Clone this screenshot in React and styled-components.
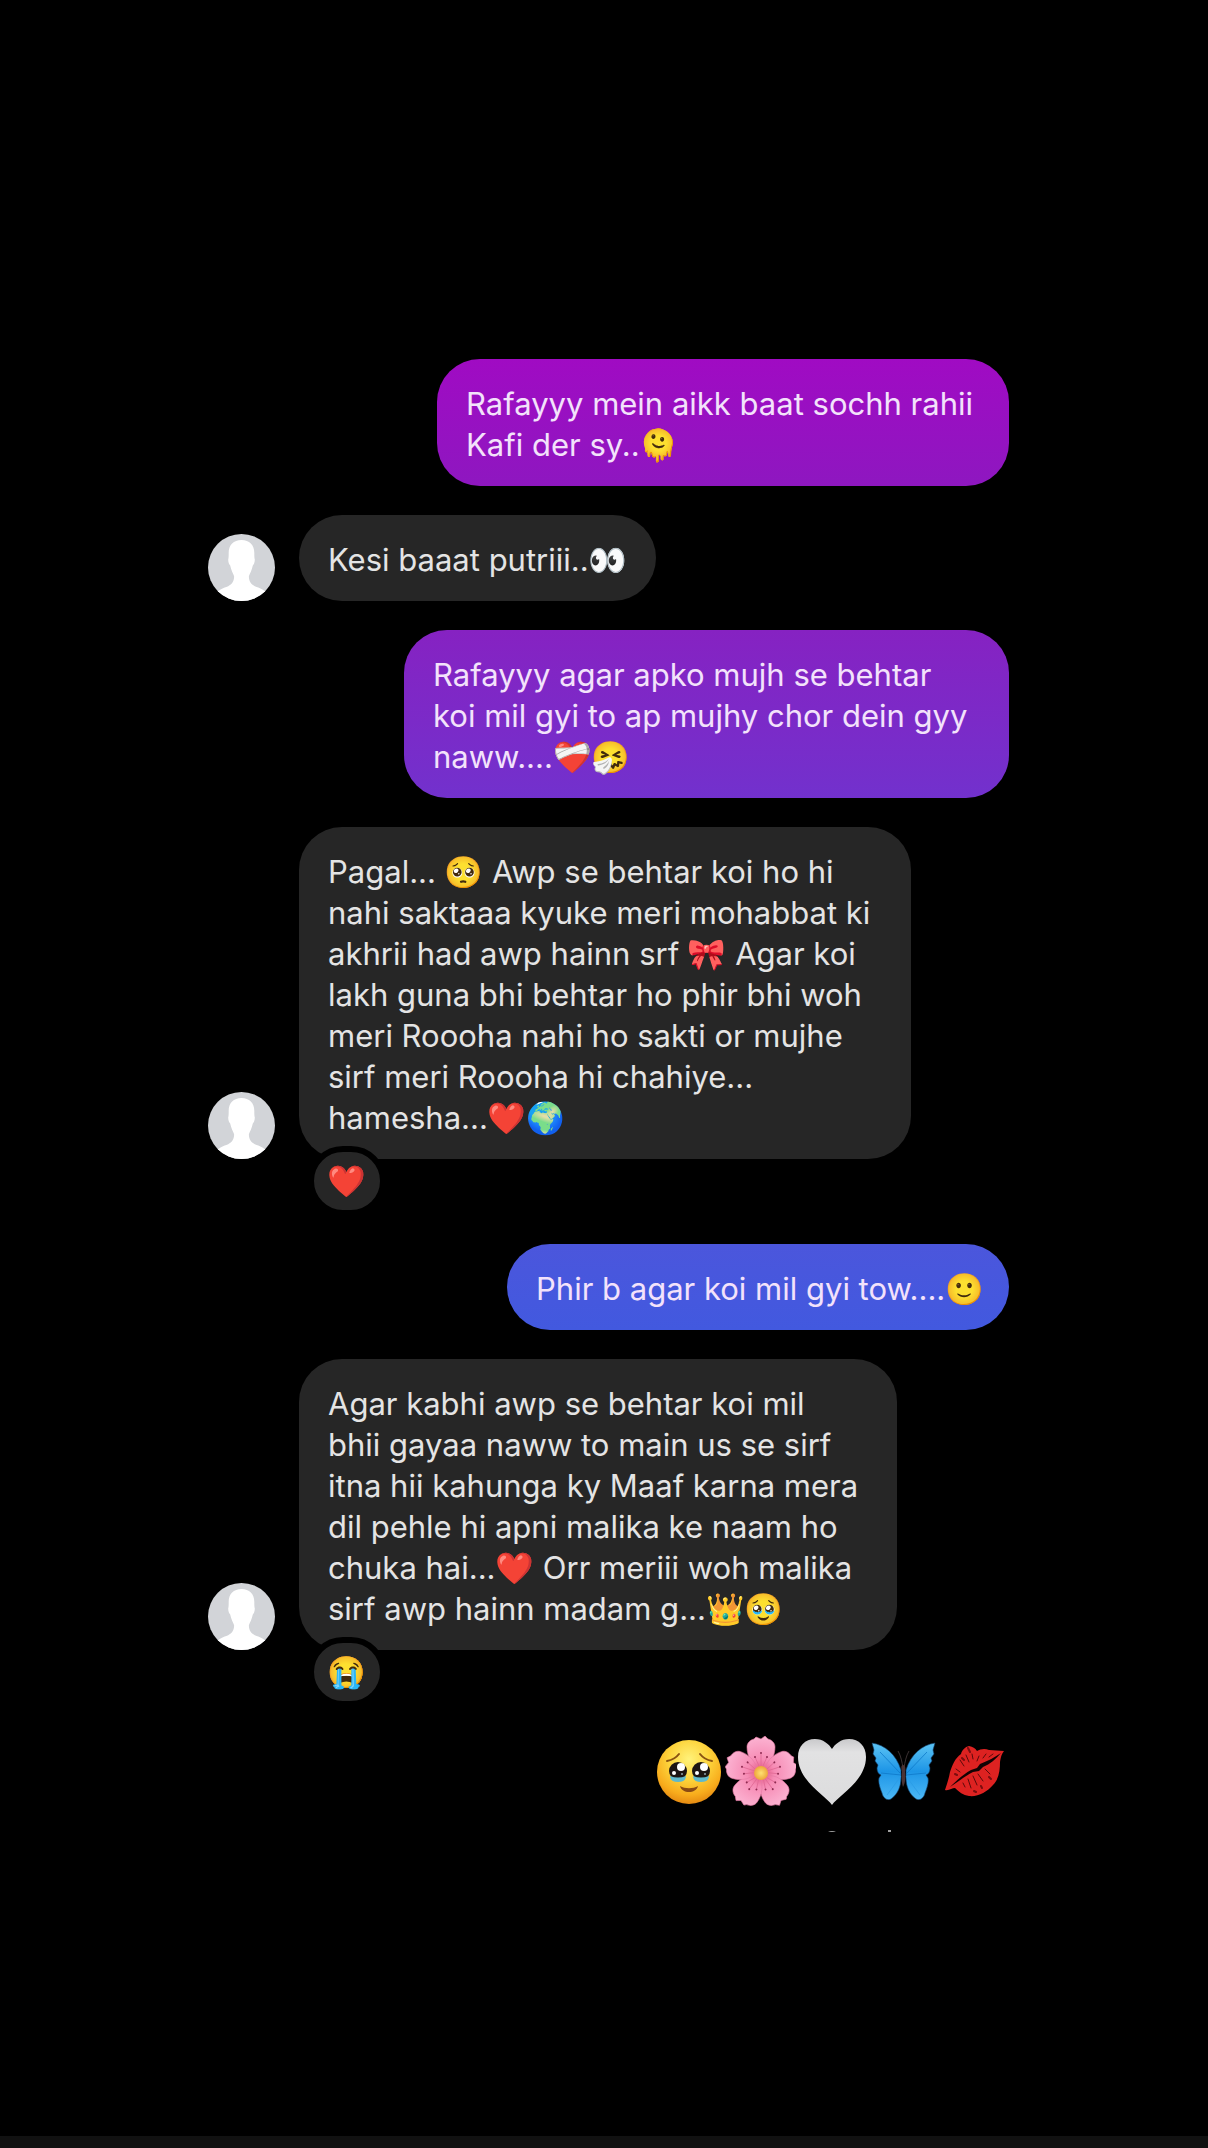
import React from "react"
import styled, { createGlobalStyle } from "styled-components"

const messages = [
  {
    mine: true,
    width: 572,
    from: "#a00bc3",
    to: "#8e17c0",
    lines: ["Rafayyy mein aikk baat sochh rahii", "Kafi der sy..🫠"],
  },
  {
    width: 357,
    lines: ["Kesi baaat putriii..👀"],
  },
  {
    mine: true,
    width: 605,
    from: "#8622c2",
    to: "#7231cd",
    lines: ["Rafayyy agar apko mujh se behtar", "koi mil gyi to ap mujhy chor dein gyy", "naww....❤️‍🩹🤧"],
  },
  {
    width: 612,
    reaction: "❤️",
    lines: [
      "Pagal... 🥺 Awp se behtar koi ho hi",
      "nahi saktaaa kyuke meri mohabbat ki",
      "akhrii had awp hainn srf 🎀 Agar koi",
      "lakh guna bhi behtar ho phir bhi woh",
      "meri Roooha nahi ho sakti or mujhe",
      "sirf meri Roooha hi chahiye...",
      "hamesha...❤️🌍",
    ],
  },
  {
    mine: true,
    width: 502,
    from: "#4b56dc",
    to: "#4259df",
    lines: ["Phir b agar koi mil gyi tow....🙂"],
  },
  {
    width: 598,
    reaction: "😭",
    lines: [
      "Agar kabhi awp se behtar koi mil",
      "bhii gayaa naww to main us se sirf",
      "itna hii kahunga ky Maaf karna mera",
      "dil pehle hi apni malika ke naam ho",
      "chuka hai...❤️ Orr meriii woh malika",
      "sirf awp hainn madam g...👑🥹",
    ],
  },
]

const Person = () => (
  <Avatar viewBox="0 0 68 68" role="img" aria-label="Profile">
    <defs>
      <clipPath id="round"><circle cx="34" cy="34" r="34" /></clipPath>
    </defs>
    <g clipPath="url(#round)">
      <rect width="68" height="68" fill="#d2d4d8" />
      <path
        fill="#fff"
        d="M34 6c-8 0-13 5-13 13 0 3 0 5-.5 7 0 3 1 5 2 6 1 5 3 8 4 11 0 5-2 8-6 10-5 2-9 3-12 7v10h51V60c-3-4-7-5-12-7-4-2-6-5-6-10 1-3 3-6 4-11 1-1 2-3 2-6-.5-2-.5-4-.5-7 0-8-5-13-13-13z"
      />
    </g>
  </Avatar>
)

const TearyFace = () => (
  <Sticker viewBox="0 0 71 71" role="img" aria-label="🥹">
    <defs>
      <radialGradient id="face" cx="50%" cy="30%" r="70%">
        <stop offset="0" stopColor="#fff27a" />
        <stop offset=".45" stopColor="#fdd43c" />
        <stop offset=".8" stopColor="#f8ac1c" />
        <stop offset="1" stopColor="#e58a12" />
      </radialGradient>
    </defs>
    <circle cx="35" cy="36" r="32" fill="url(#face)" />
    <path d="M13 25c5-1 9-3 12-7M58 25c-5-1-9-3-12-7" fill="none" stroke="#8a5210" strokeWidth="2" strokeLinecap="round" />
    {[24, 47].map((x) => (
      <g key={x}>
        <circle cx={x} cy="35" r="9" fill="#1c1513" />
        <path d={`M${x - 8} 40q8 3 16 0q0 6-8 6t-8-6z`} fill="#5fb9cc" />
        <circle cx={x + 3} cy="31" r="4" fill="#fff" />
        <circle cx={x - 4} cy="37" r="2" fill="#fff" />
        <circle cx={x + 4} cy="38" r="1" fill="#8fa3ad" />
      </g>
    ))}
    <path d="M26 50c5 3 13 3 18 0-1 4-5 6-9 6s-8-2-9-6z" fill="#8a4a14" />
  </Sticker>
)

const Blossom = () => (
  <Sticker viewBox="0 0 71 71" role="img" aria-label="🌸">
    <defs>
      <radialGradient id="petal" gradientUnits="userSpaceOnUse" cx="36" cy="36" r="36">
        <stop offset="0" stopColor="#e0527f" />
        <stop offset=".35" stopColor="#f68bb4" />
        <stop offset="1" stopColor="#fcb4d3" />
      </radialGradient>
      <radialGradient id="pollen">
        <stop offset="0" stopColor="#ffe173" />
        <stop offset="1" stopColor="#eda63a" />
      </radialGradient>
    </defs>
    {[0, 72, 144, 216, 288].map((turn) => (
      <g key={turn} transform={`rotate(${turn} 36 37)`}>
        <path
          d="M36 37L26 25C23 20 22 15 22 11c0-4 3-7 7-8l2-2 5 2 4-3 3 3c4 1 7 4 7 8 0 4-1 9-4 14z"
          fill="url(#petal)"
          stroke="#e57ba5"
          strokeWidth=".6"
        />
        <path d="M36 31V18M34 30l-4-9M38 30l4-9" stroke="#e06a96" strokeWidth=".8" />
        <g fill="#8e2a50">
          <circle cx="36" cy="17" r="1" />
          <circle cx="30" cy="21" r="1" />
          <circle cx="42" cy="21" r="1" />
        </g>
      </g>
    ))}
    <circle cx="36" cy="37" r="7" fill="url(#pollen)" />
  </Sticker>
)

const WhiteHeart = () => (
  <Sticker viewBox="0 0 71 71" role="img" aria-label="🤍">
    <defs>
      <linearGradient id="pearl" x1="0" y1="0" x2="0" y2="1">
        <stop offset="0" stopColor="#c9c9cb" />
        <stop offset=".2" stopColor="#e2e2e3" />
        <stop offset="1" stopColor="#dcdcdd" />
      </linearGradient>
    </defs>
    <path
      d="M36 69C30 60 2 45 2 21 2 10 9 3 19 3c8 0 14 5 17 10C39 8 45 3 53 3c10 0 17 7 17 18 0 24-28 39-34 48z"
      fill="url(#pearl)"
    />
  </Sticker>
)

const Butterfly = () => (
  <Sticker viewBox="0 0 71 71" role="img" aria-label="🦋">
    <defs>
      <linearGradient id="wing" x1="0" y1="0" x2="0" y2="1">
        <stop offset="0" stopColor="#5cc4f4" />
        <stop offset=".5" stopColor="#1d95e6" />
        <stop offset="1" stopColor="#4cb8f6" />
      </linearGradient>
    </defs>
    {["", "translate(73 0) scale(-1 1)"].map((side) => (
      <g key={side} transform={side}>
        <path
          d="M5 7c13 2 24 11 29 27v8c0 8-3 16-10 21-4 2-8-1-9-6-2-5-4-11-3-15l2-3c-3-1-4-4-4-7l1-3-3-4 1-3-3-4 1-4z"
          fill="url(#wing)"
          stroke="#123c66"
          strokeWidth=".6"
        />
        <path d="M34 38L13 16M34 39l-20-2" stroke="#0e78c9" strokeWidth=".8" fill="none" />
        <path d="M34 40L20 59" stroke="#2b9ce6" strokeWidth=".8" fill="none" />
        <path d="M36 32c-1-6-2-12-5-17" stroke="#3b3233" strokeWidth="1" fill="none" />
      </g>
    ))}
    <path d="M36 29c2 0 3 3 2 7 1 5 0 12-2 15-1-3-2-10-1-15-1-4-1-7 1-7z" fill="#4b3334" />
  </Sticker>
)

const Kiss = () => (
  <Sticker viewBox="0 0 71 71" role="img" aria-label="💋">
    <path
      d="M7 54c2-6 4-12 5-18 2-6 5-14 11-18 1-4 4-7 8-8 4 1 6 2 8 5 3-2 8-3 12-1l15 1c-3 4-3 6-4 11 0 8-1 17-7 23-6 7-15 12-24 11-6-1-10-4-14-8-3 0-6 3-10 2z"
      fill="#dd2221"
    />
    <path d="M12 51c8-8 14-13 21-17l6-2 3-4c8-3 15-7 21-11-5 6-11 11-18 14l-4 4-6 1c-8 4-15 10-23 15z" fill="#120304" />
    <g stroke="#5a0a0b" strokeWidth="1" strokeLinecap="round" fill="none">
      <path d="M22 24l4 6M28 19l3 7M18 33l4 3M34 18l1 5M41 20l-2 5M48 18l-3 4M55 18l-4 3" />
      <path d="M30 43l3 9M35 40l4 9M40 38l5 7M47 33l5 5M25 47l2 4" />
    </g>
    <path d="M24 22l2 2M30 12l2 4M17 38l2 1M36 55l2 1M51 41l2 2M43 50l1 2" stroke="#7a0d0f" strokeWidth="2" strokeLinecap="round" />
  </Sticker>
)

const Message = ({ mine, width, from, to, lines, reaction }) => (
  <Row $mine={mine} $reacted={!!reaction}>
    {!mine && <Person />}
    <Bubble $mine={mine} $width={width} $from={from} $to={to}>
      {lines.map((line) => (
        <Line key={line}>{line}</Line>
      ))}
      {reaction && <Reaction>{reaction}</Reaction>}
    </Bubble>
  </Row>
)

const App = () => {
  return (
    <Page>
      <GlobalStyle />
      <Chat>
        {messages.map((m) => (
          <Message key={m.lines[0]} {...m} />
        ))}
        <Stickers>
          <TearyFace />
          <Blossom />
          <WhiteHeart />
          <Butterfly />
          <Kiss />
        </Stickers>
      </Chat>
      <Status viewBox="0 0 64 3" aria-hidden="true">
        <path d="M0 2q4-2 8 0zM60 0h3v2h-3z" fill="#a0a0a0" />
      </Status>
      <BottomBar />
    </Page>
  )
}

export default App

const GlobalStyle = createGlobalStyle`
* {
  box-sizing: border-box;
}
body {
  margin: 0;
  background: #000;
}
`
const Page = styled.div`
  min-height: 100vh;
  display: flex;
  flex-direction: column;
  background: #000;
  font-family: Inter, Roboto, "Noto Color Emoji", sans-serif;
`
const Chat = styled.main`
  display: flex;
  flex-direction: column;
  gap: 29px;
  padding: 359px 199px 0 208px;
`
const Row = styled.div`
  display: flex;
  align-items: flex-end;
  gap: 24px;
  justify-content: ${(p) => (p.$mine ? "flex-end" : "flex-start")};
  margin-bottom: ${(p) => (p.$reacted ? "56px" : "0")};
`
const Avatar = styled.svg`
  width: 67px;
  height: 67px;
  flex: none;
`
const Bubble = styled.div`
  position: relative;
  width: ${(p) => p.$width}px;
  max-width: 100%;
  padding: 24px 12px 21px 29px;
  border-radius: 43px;
  background: ${(p) => (p.$mine ? `linear-gradient(${p.$from}, ${p.$to})` : "#262626")};
  color: ${(p) => (p.$mine ? "#f3e2fb" : "#e4e4e4")};
`
const Line = styled.div`
  font-size: 31px;
  line-height: 41px;
`
const Reaction = styled.span`
  position: absolute;
  left: 9px;
  bottom: -57px;
  width: 78px;
  height: 70px;
  display: flex;
  align-items: center;
  justify-content: center;
  border: 6px solid #000;
  border-radius: 35px;
  background: #262626;
  font-size: 31px;
`
const Stickers = styled.div`
  display: flex;
  align-items: center;
  justify-content: flex-end;
  height: 72px;
`
const Sticker = styled.svg`
  width: 71px;
  height: 71px;
  flex: none;
`
const Status = styled.svg`
  width: 64px;
  height: 3px;
  align-self: flex-end;
  margin: 23px 316px 0 0;
`
const BottomBar = styled.footer`
  height: 12px;
  margin-top: auto;
  background: #111;
`
